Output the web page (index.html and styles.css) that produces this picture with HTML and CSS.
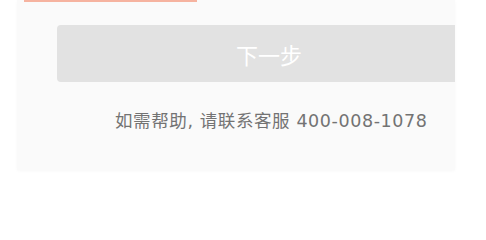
FILE: index.html
```html
<!DOCTYPE html>
<html lang="zh">
<head>
<meta charset="utf-8">
<link rel="stylesheet" href="styles.css">
</head>
<body>
<div class="card">
  <div class="accent"></div>
  <div class="btn">下一步</div>
  <p class="help">如需帮助, 请联系客服 400-008-1078</p>
</div>
</body>
</html>
```
FILE: styles.css
```css
html, body {
  margin: 0;
  padding: 0;
  background: #ffffff;
}
body {
  font-family: "Noto Sans CJK SC", "Noto Sans", sans-serif;
  width: 486px;
  height: 204px;
  overflow: hidden;
}
.card {
  margin-left: 17px;
  width: 438px;
  height: 170px;
  background: #fafafa;
  overflow: hidden;
  display: flex;
  flex-direction: column;
  box-shadow: 0 1px 3px rgba(0,0,0,0.03);
}
.accent {
  margin-left: 7px;
  width: 173px;
  height: 2px;
  background: #f6b3a0;
  flex: none;
}
.btn {
  margin-top: 23px;
  margin-left: 40px;
  width: 424px;
  height: 57px;
  flex: none;
  background: #e2e2e2;
  border-radius: 4px;
  color: #ffffff;
  font-size: 22px;
  display: flex;
  align-items: center;
  justify-content: center;
}
.help {
  margin: 27px 0 0 98px;
  font-family: "DejaVu Sans", "Noto Sans CJK SC", sans-serif;
  font-size: 17.5px;
  letter-spacing: 0.6px;
  line-height: 24px;
  color: #737373;
  white-space: nowrap;
}
```
